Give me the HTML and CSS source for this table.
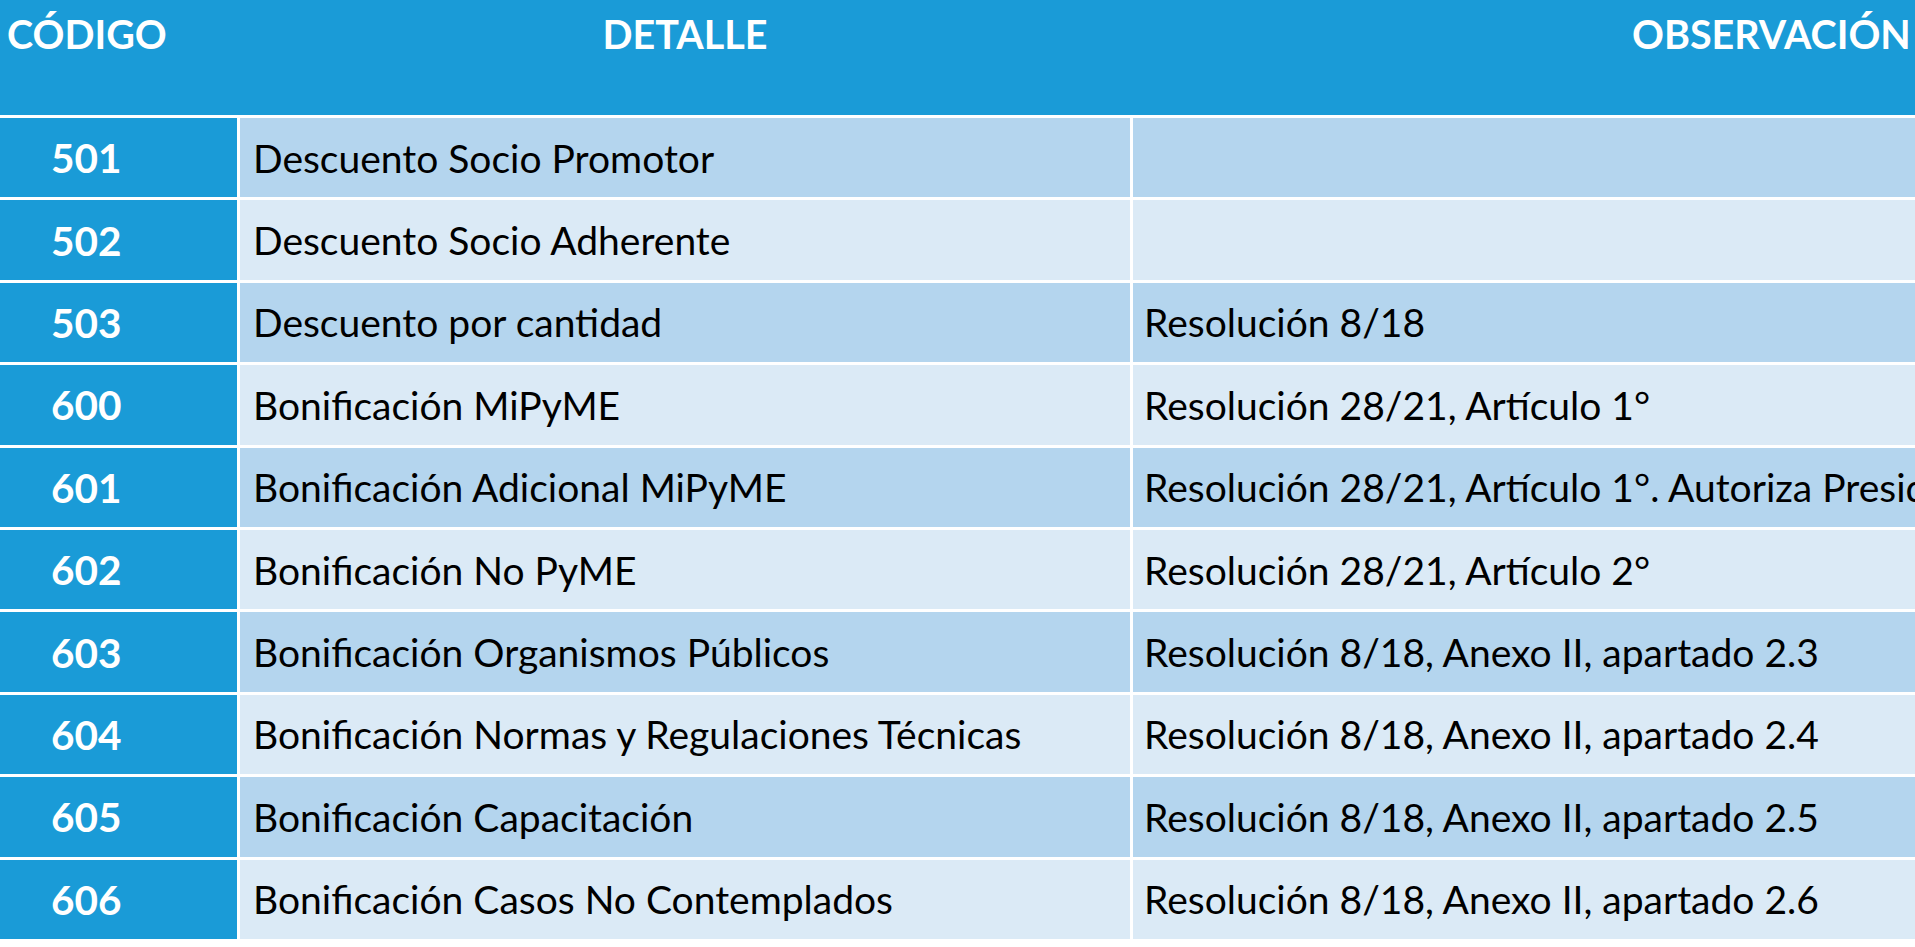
FILE: index.html
```html
<!DOCTYPE html>
<html lang="es">
<head>
<meta charset="utf-8">
<title>Códigos de descuento y bonificación</title>
<link rel="stylesheet" href="styles.css">
</head>
<body>
<div class="sheet">
  <div class="head">
    <div class="hcell hcode">CÓDIGO</div>
    <div class="hcell hdet">DETALLE</div>
    <div class="hcell hobs">OBSERVACIÓN</div>
  </div>
  <div class="body">
    <div class="code">501</div><div class="cell dark">Descuento Socio Promotor</div><div class="cell dark"></div>
    <div class="code">502</div><div class="cell light">Descuento Socio Adherente</div><div class="cell light"></div>
    <div class="code">503</div><div class="cell dark">Descuento por cantidad</div><div class="cell dark">Resolución 8/18</div>
    <div class="code">600</div><div class="cell light">Bonificación MiPyME</div><div class="cell light">Resolución 28/21, Artículo 1°</div>
    <div class="code">601</div><div class="cell dark">Bonificación Adicional MiPyME</div><div class="cell dark">Resolución 28/21, Artículo 1°. Autoriza Presidencia</div>
    <div class="code">602</div><div class="cell light">Bonificación No PyME</div><div class="cell light">Resolución 28/21, Artículo 2°</div>
    <div class="code">603</div><div class="cell dark">Bonificación Organismos Públicos</div><div class="cell dark">Resolución 8/18, Anexo II, apartado 2.3</div>
    <div class="code">604</div><div class="cell light">Bonificación Normas y Regulaciones Técnicas</div><div class="cell light">Resolución 8/18, Anexo II, apartado 2.4</div>
    <div class="code">605</div><div class="cell dark">Bonificación Capacitación</div><div class="cell dark">Resolución 8/18, Anexo II, apartado 2.5</div>
    <div class="code">606</div><div class="cell light">Bonificación Casos No Contemplados</div><div class="cell light">Resolución 8/18, Anexo II, apartado 2.6</div>
  </div>
</div>
</body>
</html>
```
FILE: styles.css
```css
html, body {
  margin: 0;
  padding: 0;
  background: #ffffff;
  overflow: hidden;
}
body {
  width: 1915px;
  height: 947px;
  font-family: Lato, "Liberation Sans", sans-serif;
}
.sheet {
  width: 2430px;
}
.head {
  display: grid;
  grid-template-columns: 237px 890px 1297px;
  column-gap: 3px;
  height: 115px;
  background: #1a9bd7;
  color: #ffffff;
  font-weight: 700;
  font-size: 39.5px;
  border-bottom: 3px solid #ffffff;
}
.hcell {
  padding-top: 10px;
  line-height: 48px;
  white-space: nowrap;
}
.hcode { padding-left: 7px; }
.hdet { text-align: center; }
.hobs { padding-left: 499px; }
.body {
  display: grid;
  grid-template-columns: 237px 890px 1297px;
  grid-auto-rows: 79.4px;
  gap: 3px;
  font-size: 39px;
}
.code {
  background: #1a9bd7;
  color: #ffffff;
  font-weight: 700;
  font-size: 40.5px;
  padding-left: 51px;
  display: flex;
  align-items: center;
}
.cell {
  display: flex;
  align-items: center;
  color: #000000;
  white-space: nowrap;
  overflow: hidden;
  padding-left: 13px;
}
.cell + .cell { padding-left: 11px; }
.dark { background: #b4d5ee; }
.light { background: #dbeaf6; }
```
